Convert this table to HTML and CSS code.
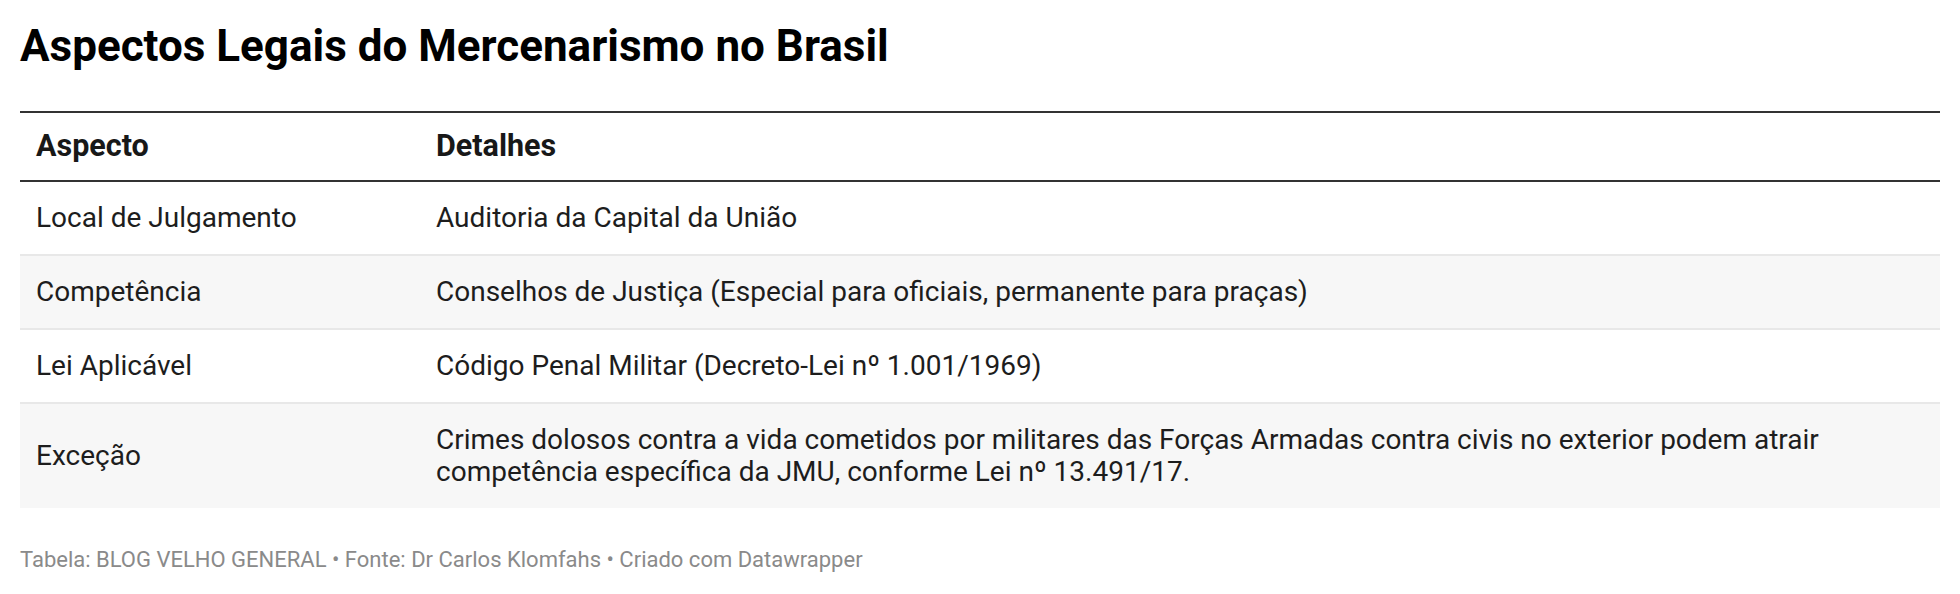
FILE: index.html
```html
<!DOCTYPE html>
<html lang="pt-BR">
<head>
<meta charset="utf-8">
<title>Aspectos Legais do Mercenarismo no Brasil</title>
<link rel="stylesheet" href="styles.css">
</head>
<body>
<div class="chart">
  <h1 class="title">Aspectos Legais do Mercenarismo no Brasil</h1>
  <table class="data-table">
    <thead>
      <tr>
        <th class="col-aspect">Aspecto</th>
        <th class="col-detail">Detalhes</th>
      </tr>
    </thead>
    <tbody>
      <tr>
        <td>Local de Julgamento</td>
        <td>Auditoria da Capital da União</td>
      </tr>
      <tr class="striped">
        <td>Competência</td>
        <td>Conselhos de Justiça (Especial para oficiais, permanente para praças)</td>
      </tr>
      <tr>
        <td>Lei Aplicável</td>
        <td>Código Penal Militar (Decreto-Lei nº 1.001/1969)</td>
      </tr>
      <tr class="striped last">
        <td>Exceção</td>
        <td>Crimes dolosos contra a vida cometidos por militares das Forças Armadas contra civis no exterior podem atrair competência específica da JMU, conforme Lei nº 13.491/17.</td>
      </tr>
    </tbody>
  </table>
  <p class="footer">Tabela: BLOG VELHO GENERAL • Fonte: Dr Carlos Klomfahs • Criado com Datawrapper</p>
</div>
</body>
</html>
```

FILE: styles.css
```css
html, body {
  margin: 0;
  padding: 0;
  background: #ffffff;
}

body {
  font-family: Roboto, "Liberation Sans", sans-serif;
  color: #1d1d1d;
}

.chart {
  padding: 20px 20px 0 20px;
}

.title {
  margin: 0 0 38px 0;
  font-size: 44px;
  line-height: 1.2;
  font-weight: 700;
  color: #000000;
}

.data-table {
  width: 100%;
  border-collapse: collapse;
  font-size: 28px;
  line-height: 32px;
}

.data-table th {
  text-align: left;
  font-size: 30.5px;
  font-weight: 700;
  color: #181818;
  padding: 17px 16px 18px 16px;
  border-top: 2px solid #333333;
  border-bottom: 2px solid #333333;
  vertical-align: middle;
}

.col-aspect {
  width: 368px;
}

.data-table td {
  padding: 20px 16px;
  border-bottom: 2px solid #e8e8e8;
  vertical-align: middle;
  color: #1d1d1d;
}

.data-table tr.striped td {
  background: #f7f7f7;
}

.data-table tr.last td {
  border-bottom: none;
}

.footer {
  margin: 39px 0 0 0;
  font-size: 22px;
  line-height: 26px;
  color: #8a8a8a;
}
```
